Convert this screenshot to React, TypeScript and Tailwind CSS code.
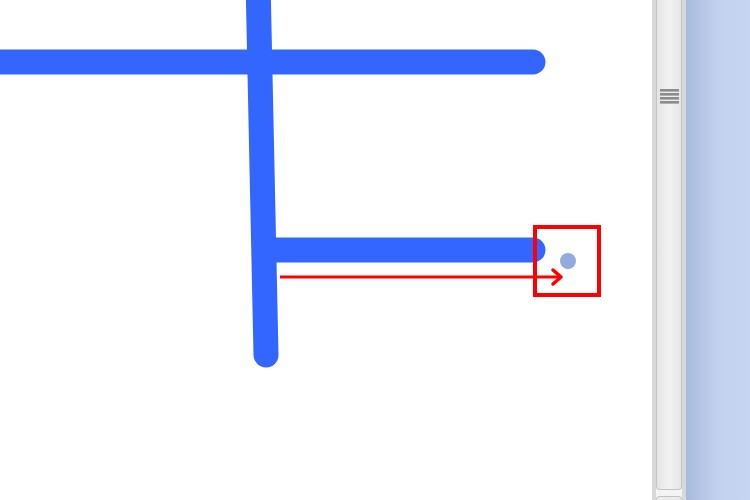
import React from "react";

const Canvas = () => (
  <div className="relative h-full w-[652px] bg-white overflow-hidden">
    <svg width="652" height="500" viewBox="0 0 652 500" className="block">
      <g stroke="#3366ff" strokeWidth="25" strokeLinecap="round" fill="none">
        <line x1="-20" y1="62" x2="533" y2="62" />
        <line x1="258" y1="-20" x2="266" y2="355" />
        <line x1="266" y1="250" x2="533" y2="250" />
      </g>
      <circle cx="568" cy="261" r="8" fill="#92aadf" />
      <line x1="280" y1="277" x2="560" y2="277" stroke="#ff0000" strokeWidth="3" />
      <polyline
        points="553,270 561,277 553,284"
        stroke="#ff0000"
        strokeWidth="3.5"
        fill="none"
        strokeLinecap="round"
        strokeLinejoin="round"
      />
      <rect x="535" y="227" width="64" height="68" stroke="#ff0000" strokeWidth="4" fill="none" />
    </svg>
  </div>
);

const Scrollbar = () => (
  <div className="flex h-full w-[34px] flex-col border-x-4 border-[#d8d8d8] bg-[#f4f4f4]">
    <div className="flex h-[490px] flex-col items-center rounded-b-sm border-x border-b border-[#c4c4c4] bg-gradient-to-r from-[#e4e4e4] via-[#f2f2f2] to-[#e6e6e6] pt-[89px]">
      <div className="flex w-[19px] flex-col gap-[1.5px]">
        <div className="h-[2.5px] bg-[#8c8c8c] border-b border-[#b0b0b0]" />
        <div className="h-[2.5px] bg-[#8c8c8c] border-b border-[#b0b0b0]" />
        <div className="h-[2.5px] bg-[#8c8c8c] border-b border-[#b0b0b0]" />
        <div className="h-[2.5px] bg-[#8c8c8c] border-b border-[#b0b0b0]" />
      </div>
    </div>
    <div className="mt-[6px] flex-1 rounded-t-sm border-x border-t border-[#c4c4c4] bg-[#ececec]" />
  </div>
);

export default function App() {
  return (
    <div className="flex h-[500px] w-[750px] overflow-hidden">
      <Canvas />
      <Scrollbar />
      <div className="h-full flex-1 bg-gradient-to-r from-[#a9b9da] via-[#c3d2ef] to-[#c6d5f1]" />
    </div>
  );
}
